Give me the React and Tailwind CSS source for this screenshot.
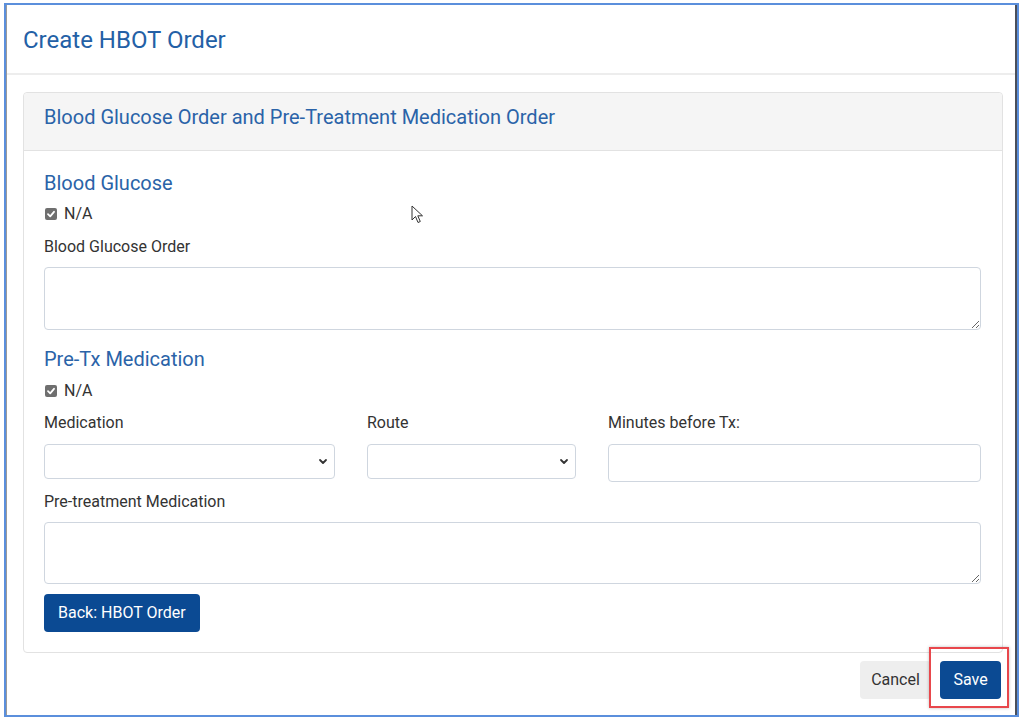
import React from "react";

const FONT = { fontFamily: "Roboto, 'Liberation Sans', sans-serif" };

function NaCheck() {
  return (
    <label className="flex items-center h-5 text-[16px] text-[#333]">
      <span className="w-[12px] h-[12px] ml-[1px] rounded-[2px] bg-[#6f6f6f] flex items-center justify-center">
        <svg width="10" height="10" viewBox="0 0 10 10">
          <path d="M2 5.2 L4.2 7.3 L8 2.8" fill="none" stroke="#fff" strokeWidth="1.8" strokeLinecap="round" strokeLinejoin="round" />
        </svg>
      </span>
      <span className="ml-[7px]">N/A</span>
    </label>
  );
}

function Select({ className }) {
  return (
    <div className={`relative h-[35px] bg-white border border-[#cfd6df] rounded-[4px] ${className}`}>
      <svg className="absolute right-[6px] top-[13px]" width="10" height="8" viewBox="0 0 10 8">
        <path d="M2 2 L5 5 L8 2" fill="none" stroke="#333" strokeWidth="1.8" strokeLinecap="round" strokeLinejoin="round" />
      </svg>
    </div>
  );
}

function Label({ children, className = "" }) {
  return <div className={`h-5 leading-5 text-[16px] text-[#333] ${className}`}>{children}</div>;
}

export default function App() {
  return (
    <div className="w-[1024px] h-[720px] bg-white pt-[3px] pl-[4px]" style={FONT}>
      <div className="relative w-[1015px] h-[714px] border-2 border-[#5b8fdc]">
        <div className="h-full flex flex-col border-l border-[#9a9a9a] border-r-2 border-r-[#4a4f5a]">
          <div className="h-[70px] flex items-center pl-[16px] pt-[2px] border-b-2 border-[#ededed]">
            <h1 className="text-[24px] text-[#2360a6] leading-7">Create HBOT Order</h1>
          </div>

          <div className="mt-[17px] ml-[16px] w-[980px] border border-[#e2e2e2] rounded-[4px]">
            <div className="h-[58px] bg-[#f5f5f5] border-b border-[#e2e2e2] pl-[20px] pt-[12px] rounded-t-[4px]">
              <h2 className="text-[20px] leading-6 text-[#2a63a8]">Blood Glucose Order and Pre-Treatment Medication Order</h2>
            </div>

            <div className="px-[20px] pt-[20px] pb-[20px]">
              <h3 className="text-[20px] leading-6 text-[#2a63a8]">Blood Glucose</h3>
              <div className="mt-[9px]"><NaCheck /></div>
              <Label className="mt-[13px]">Blood Glucose Order</Label>
              <textarea className="mt-[10px] block w-[937px] h-[63px] border border-[#cfd6df] rounded-[4px] outline-none" />

              <h3 className="mt-[17px] text-[20px] leading-6 text-[#2a63a8]">Pre-Tx Medication</h3>
              <div className="mt-[10px]"><NaCheck /></div>

              <div className="mt-[12px] grid grid-cols-[291px_209px_373px] gap-x-[32px]">
                <Label>Medication</Label>
                <Label>Route</Label>
                <Label>Minutes before Tx:</Label>
                <Select className="mt-[11px]" />
                <Select className="mt-[11px]" />
                <div className="mt-[11px] h-[38px] border border-[#cfd6df] rounded-[4px]" />
              </div>

              <Label className="mt-[10px]">Pre-treatment Medication</Label>
              <textarea className="mt-[10px] block w-[937px] h-[62px] border border-[#cfd6df] rounded-[4px] outline-none" />

              <button className="mt-[10px] h-[38px] px-[14px] bg-[#0b4a93] text-white text-[16px] rounded-[4px]">
                Back: HBOT Order
              </button>
            </div>
          </div>

          <div className="flex justify-end gap-[9px] mt-[8px] pr-[14px]">
            <button className="h-[38px] w-[71px] bg-[#eeeeee] text-[#333] text-[16px] rounded-[4px]">Cancel</button>
            <div className="relative">
              <button className="h-[38px] w-[61px] bg-[#0b4a93] text-white text-[16px] rounded-[4px]">Save</button>
              <div className="absolute -left-[11px] -right-[8px] -top-[14px] -bottom-[9px] border-2 border-[#e8474c] shadow-[0_0_3px_rgba(0,0,0,0.25)]" />
            </div>
          </div>
        </div>

        <svg className="absolute left-[405px] top-[200px]" width="14" height="20" viewBox="0 0 14 20">
          <path d="M1 1 L1 15 L4.5 11.5 L7 17.5 L9.3 16.5 L6.8 10.8 L11.5 10.8 Z" fill="#fff" stroke="#333" strokeWidth="1" strokeLinejoin="round" />
        </svg>
      </div>
    </div>
  );
}
